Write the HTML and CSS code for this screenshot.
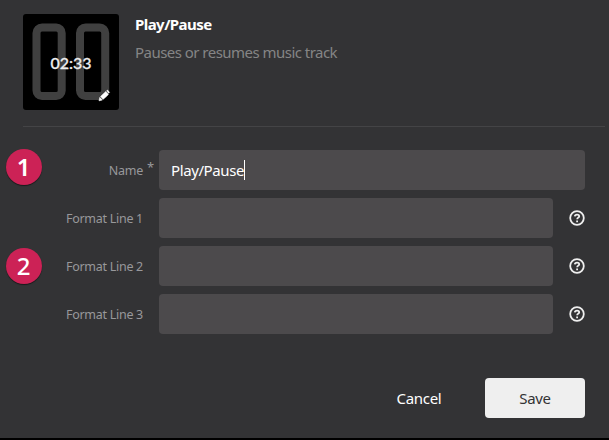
FILE: index.html
```
<!DOCTYPE html>
<html lang="en">
<head>
<meta charset="utf-8">
<title>Play/Pause</title>
<link rel="stylesheet" href="styles.css">
</head>
<body>
<main class="dialog">
  <header class="header">
    <svg class="thumb" viewBox="0 0 96 96">
      <defs><filter id="soft"><feGaussianBlur stdDeviation="0.6"/></filter></defs>
      <rect width="96" height="96" rx="3" fill="#000"/>
      <g fill="none" stroke="#404040" stroke-width="8" filter="url(#soft)">
        <rect x="13.5" y="13.5" width="25.2" height="68.5" rx="5.5"/>
        <rect x="57" y="13.5" width="25.2" height="68.5" rx="5.5"/>
      </g>
      <text class="time" x="27.5" y="54.5" textLength="41" lengthAdjust="spacingAndGlyphs">02:33</text>
      <path d="M76 86.8l.8-3.4 2.6 2.6zM77.6 82.4l5.2-4.8 2.6 2.8-5.2 4.8zM83.6 76.8l.9-.7 2 2.2-.8.9z" fill="#fff" stroke="#fff" stroke-width=".6"/>
    </svg>
    <div class="intro">
      <h1 class="title">Play/Pause</h1>
      <p class="description">Pauses or resumes music track</p>
    </div>
  </header>
  <form class="form">
    <div class="row">
      <span class="badge one">1</span>
      <span class="label">Name</span><span class="required">*</span>
      <div class="field"><span class="value">Play/Pause</span><i class="caret"></i></div>
    </div>
    <div class="row">
      <span class="label">Format Line 1</span><span class="required"></span>
      <div class="field"></div>
      <svg class="help" viewBox="0 0 16 16"><circle cx="8" cy="8" r="6.8"/><path d="M5.8 6.3c.2-2.2 4.4-2.3 4.4-.1 0 1.5-2 1.4-2 3"/><path d="M8.1 10.6v1.6"/></svg>
    </div>
    <div class="row">
      <span class="badge two">2</span>
      <span class="label">Format Line 2</span><span class="required"></span>
      <div class="field"></div>
      <svg class="help" viewBox="0 0 16 16"><circle cx="8" cy="8" r="6.8"/><path d="M5.8 6.3c.2-2.2 4.4-2.3 4.4-.1 0 1.5-2 1.4-2 3"/><path d="M8.1 10.6v1.6"/></svg>
    </div>
    <div class="row">
      <span class="label">Format Line 3</span><span class="required"></span>
      <div class="field"></div>
      <svg class="help" viewBox="0 0 16 16"><circle cx="8" cy="8" r="6.8"/><path d="M5.8 6.3c.2-2.2 4.4-2.3 4.4-.1 0 1.5-2 1.4-2 3"/><path d="M8.1 10.6v1.6"/></svg>
    </div>
  </form>
  <footer class="actions">
    <button class="button cancel" type="button">Cancel</button>
    <button class="button save" type="button">Save</button>
  </footer>
</main>
</body>
</html>
```
FILE: styles.css
```
* { box-sizing: border-box; }
body { margin: 0; background: #333335; font-family: "Noto Sans", sans-serif; overflow: hidden; }
.dialog { width: 609px; height: 440px; padding: 14px 24px 0 23px; border-bottom: 2px solid #000; }
.header { display: flex; gap: 16px; height: 113px; margin-right: -20px; border-bottom: 1px solid #444446; }
.thumb { width: 96px; height: 96px; display: block; }
.time { font: 500 16px "Lato", sans-serif; fill: #eee; stroke: #eee; stroke-width: .3px; }
.title { margin: 0; font-size: 15px; line-height: 21px; font-weight: 700; letter-spacing: -0.55px; color: #fff; white-space: nowrap; }
.description { margin: 7px 0 0; font-size: 15px; line-height: 21px; letter-spacing: -0.53px; color: #858585; white-space: nowrap; }
.form { display: grid; gap: 8px; padding-top: 23px; }
.row { display: flex; align-items: center; height: 40px; position: relative; }
.label { width: 120px; padding-top: 2px; text-align: right; font-size: 12.5px; line-height: 18px; letter-spacing: -0.28px; color: #98989b; white-space: nowrap; }
.required { width: 16px; padding: 0 0 7px 4px; font-size: 13px; line-height: 24px; color: #98989b; }
.field { flex: 1; height: 40px; border-radius: 4px; background: #4c4a4c; display: flex; align-items: center; padding-left: 12px; }
.value { color: #fff; font-size: 15px; letter-spacing: -0.4px; }
.caret { width: 1px; height: 20px; background: #fff; }
.help { width: 16px; height: 16px; margin-left: 16px; fill: none; stroke: #efefef; stroke-width: 1.8; }
.badge { position: absolute; left: -17.5px; top: -1.5px; width: 36px; height: 36px; border-radius: 50%; background: #cc2256; box-shadow: 0 1px 1px rgba(0,0,0,.5); color: #fff; font: 500 24px/36px "Noto Sans", sans-serif; text-align: center; }
.one { font-weight: 600; }
.two { top: 1.5px; }
.actions { display: flex; justify-content: flex-end; margin-top: 44px; }
.button { height: 40px; border: 0; border-radius: 4px; padding: 0; font: 15px/40px "Noto Sans", sans-serif; }
.cancel { width: 100px; margin-right: 16px; background: transparent; color: #fff; letter-spacing: -0.3px; }
.save { width: 100px; background: #efefef; color: #333335; letter-spacing: -0.3px; }
```
